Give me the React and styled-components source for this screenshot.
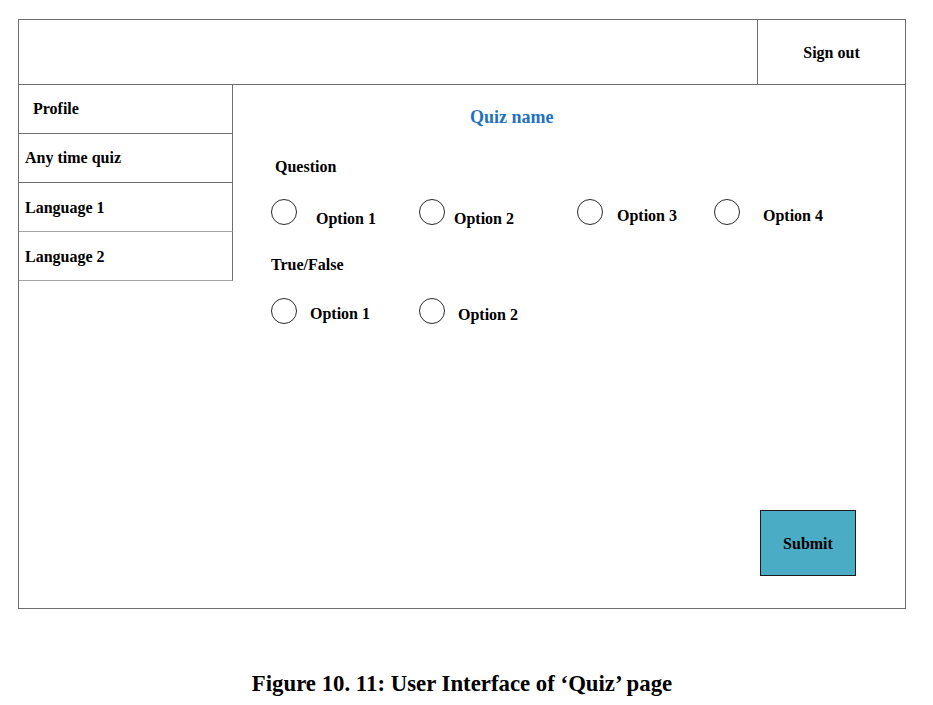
import React from "react";
import styled, { createGlobalStyle } from "styled-components";

const GlobalStyle = createGlobalStyle`
  html, body {
    margin: 0;
    padding: 0;
    background: #ffffff;
  }
  body {
    font-family: "Liberation Serif", "Times New Roman", serif;
    color: #000;
  }
`;

const Page = styled.div`
  width: 888px;
  padding: 19px 0 0 18px;
`;

const Frame = styled.div`
  height: 590px;
  box-sizing: border-box;
  border: 1px solid #6e6e6e;
  display: flex;
  flex-direction: column;
`;

const Header = styled.header`
  height: 65px;
  flex: none;
  box-sizing: border-box;
  border-bottom: 1px solid #6e6e6e;
  display: flex;
  justify-content: flex-end;
`;

const SignOut = styled.div`
  width: 148px;
  box-sizing: border-box;
  border-left: 1px solid #6e6e6e;
  display: flex;
  align-items: center;
  justify-content: center;
  font-weight: 700;
  font-size: 16px;
  padding-top: 1px;
`;

const Body = styled.div`
  flex: 1;
  display: flex;
`;

const Sidebar = styled.nav`
  width: 214px;
  flex: none;
  display: flex;
  flex-direction: column;
`;

const NavItem = styled.div`
  height: 49px;
  box-sizing: border-box;
  border-right: 1px solid #6e6e6e;
  border-bottom: 1px solid ${(p) => (p.$light ? "#a6a6a6" : "#6e6e6e")};
  padding-left: ${(p) => p.$indent}px;
  display: flex;
  align-items: center;
  font-weight: 700;
  font-size: 16px;
  padding-top: ${(p) => p.$drop}px;
`;

const Content = styled.main`
  flex: 1;
  display: flex;
  flex-direction: column;
`;

const QuizName = styled.h1`
  margin: 22px 0 0 237px;
  font-size: 18px;
  line-height: 20px;
  font-weight: 700;
  color: #1f72bf;
`;

const QuestionLabel = styled.div`
  margin: ${(p) => p.$top}px 0 0 ${(p) => p.$left}px;
  font-size: 16px;
  line-height: 20px;
  font-weight: 700;
`;

const OptionRow = styled.div`
  margin: ${(p) => p.$top}px 0 0 38px;
  display: flex;
  align-items: flex-start;
`;

const Option = styled.label`
  width: ${(p) => (p.$width ? `${p.$width}px` : "auto")};
  display: flex;
  align-items: flex-start;
  flex: none;
`;

const Radio = styled.span`
  width: 26px;
  height: 26px;
  box-sizing: border-box;
  border: 1px solid #2a2a2a;
  border-radius: 50%;
  flex: none;
`;

const OptionText = styled.span`
  margin-left: ${(p) => p.$gap}px;
  padding-top: ${(p) => p.$drop}px;
  font-size: 16px;
  line-height: 20px;
  font-weight: 700;
`;

const SubmitButton = styled.button`
  margin: auto 49px 32px auto;
  width: 96px;
  height: 66px;
  box-sizing: border-box;
  background: #4bacc6;
  border: 1px solid #1b1b1b;
  font-family: "Liberation Serif", "Times New Roman", serif;
  font-weight: 700;
  font-size: 16px;
  color: #000;
  padding: 2px 0 0;
`;

const Caption = styled.p`
  margin: 62px 0 0;
  text-align: center;
  font-size: 22.8px;
  font-weight: 700;
  line-height: 26px;
`;

const navItems = [
  { label: "Profile", indent: 14, drop: 0 },
  { label: "Any time quiz", indent: 6, drop: 0 },
  { label: "Language 1", indent: 6, drop: 2, light: true },
  { label: "Language 2", indent: 6, drop: 2, light: true },
];

const multiChoice = [
  { label: "Option 1", width: 148, gap: 19, drop: 10 },
  { label: "Option 2", width: 158, gap: 9, drop: 10 },
  { label: "Option 3", width: 137, gap: 14, drop: 7 },
  { label: "Option 4", gap: 23, drop: 7 },
];

const trueFalse = [
  { label: "Option 1", width: 148, gap: 13, drop: 6 },
  { label: "Option 2", gap: 13, drop: 7 },
];

const Options = ({ items, top }) => (
  <OptionRow $top={top}>
    {items.map((o, i) => (
      <Option key={i} $width={o.width}>
        <Radio />
        <OptionText $gap={o.gap} $drop={o.drop}>
          {o.label}
        </OptionText>
      </Option>
    ))}
  </OptionRow>
);

const App = () => {
  return (
    <Page>
      <GlobalStyle />
      <Frame>
        <Header>
          <SignOut>Sign out</SignOut>
        </Header>
        <Body>
          <Sidebar>
            {navItems.map((item) => (
              <NavItem
                key={item.label}
                $indent={item.indent}
                $drop={item.drop}
                $light={item.light}
              >
                {item.label}
              </NavItem>
            ))}
          </Sidebar>
          <Content>
            <QuizName>Quiz name</QuizName>
            <QuestionLabel $top={30} $left={42}>
              Question
            </QuestionLabel>
            <Options items={multiChoice} top={22} />
            <QuestionLabel $top={26} $left={38}>
              True/False
            </QuestionLabel>
            <Options items={trueFalse} top={23} />
            <SubmitButton>Submit</SubmitButton>
          </Content>
        </Body>
      </Frame>
      <Caption>Figure 10. 11: User Interface of ‘Quiz’ page</Caption>
    </Page>
  );
};

export default App;
